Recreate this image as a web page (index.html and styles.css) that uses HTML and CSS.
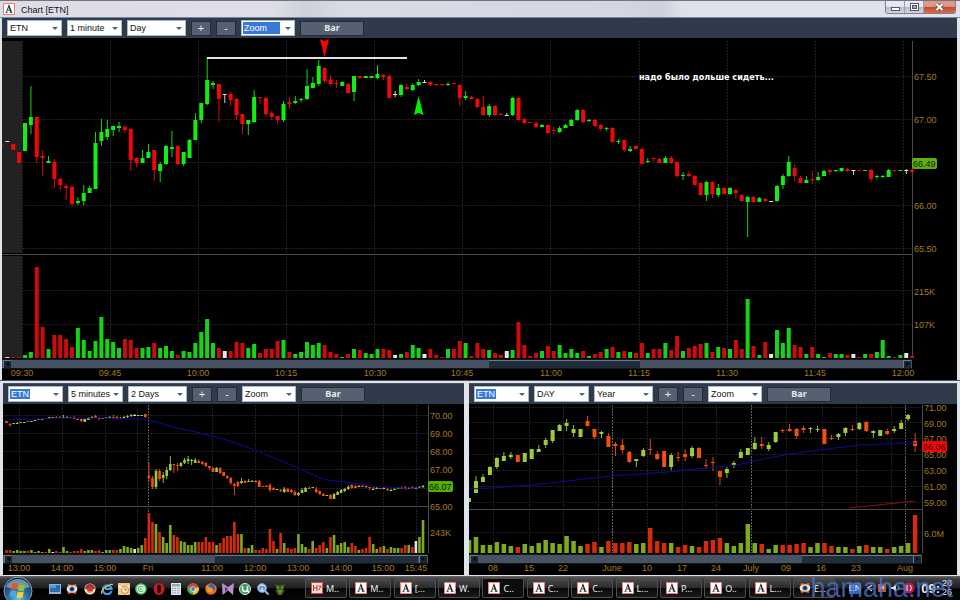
FILE: index.html
```html
<!DOCTYPE html>
<html>
<head>
  <meta charset="utf-8">
  <title>Chart [ETN]</title>
  <meta name="viewport" content="width=device-width, initial-scale=1">
  <link rel="stylesheet" href="styles.css">
</head>
<body>
  <!-- shared icons -->
  <svg class="defs" width="0" height="0" aria-hidden="true">
    <symbol id="logo" viewBox="0 0 12 12">
      <rect x="0.5" y="0.5" width="11" height="11" fill="#fff" stroke="#e8807a"/>
      <path d="M5.800 2.800 L3.500 9 M4.300 7 H7.500 M2.500 9.400 H4.600 M6.800 9.400 H9.600" stroke="#222" stroke-width="0.8" fill="none"/>
      <path d="M5.800 2.800 L8.200 9" stroke="#222" stroke-width="1.500"/>
      <circle cx="5.800" cy="2.200" r="0.800" fill="#d33"/>
    </symbol>
    <symbol id="eye" viewBox="0 0 12 12">
      <path d="M2 1 L6 2 L10 1 L11 5 L10 11 L6 10 L2 11 L1 6Z" fill="#e07030"/>
      <ellipse cx="6" cy="6" rx="5.4" ry="3.6" fill="#f4e8e0"/>
      <circle cx="6" cy="6" r="2.6" fill="#2c6aa8"/>
      <circle cx="6" cy="6" r="1.2" fill="#0a1c30"/>
    </symbol>
  </svg>

  <div class="window">
    <header class="titlebar">
      <svg class="logo"><use href="#logo"/></svg>
      <h1>Chart [ETN]</h1>
      <div class="window-buttons">
        <button type="button" aria-label="Minimize"><svg viewBox="0 0 18 12"><rect x="5.5" y="6.5" width="8" height="3" fill="#fff" stroke="#556"/></svg></button>
        <button type="button" aria-label="Maximize"><svg viewBox="0 0 18 12"><rect x="5.5" y="2.5" width="8" height="7" fill="#fff" stroke="#556"/><rect x="7.5" y="4.5" width="4" height="3" fill="#9ab" stroke="#556"/></svg></button>
        <button type="button" class="close" aria-label="Close"><svg viewBox="0 0 30 12"><path d="M12 3 L18 9 M18 3 L12 9" stroke="#555" stroke-width="3.6"/><path d="M12 3 L18 9 M18 3 L12 9" stroke="#fff" stroke-width="2"/></svg></button>
      </div>
    </header>

    <section class="pane pane-main">
      <div class="toolbar">
        <span class="combo"><select class="w-symbol" aria-label="Symbol"><option>ETN</option></select></span>
        <span class="combo"><select class="w-interval" aria-label="Interval"><option>1 minute</option></select></span>
        <span class="combo"><select class="w-range" aria-label="Range"><option>Day</option></select></span>
        <button type="button">+</button>
        <button type="button">-</button>
        <span class="combo"><select class="w-zoom selected" aria-label="Zoom"><option>Zoom</option></select></span>
        <button type="button" class="bar">Bar</button>
      </div>
      <svg id="minute" class="chart" viewBox="2 38 955 342"></svg>
    </section>

    <div class="split">
      <section class="pane">
        <div class="toolbar">
          <span class="combo"><select class="w-symbol selected" aria-label="Symbol"><option>ETN</option></select></span>
          <span class="combo"><select class="w-interval" aria-label="Interval"><option>5 minutes</option></select></span>
          <span class="combo"><select class="w-range" aria-label="Range"><option>2 Days</option></select></span>
          <button type="button">+</button>
          <button type="button">-</button>
          <span class="combo"><select class="w-zoom" aria-label="Zoom"><option>Zoom</option></select></span>
          <button type="button" class="bar">Bar</button>
        </div>
        <svg id="five" class="chart" viewBox="3 405 461 171"></svg>
      </section>
      <section class="pane">
        <div class="toolbar">
          <span class="combo"><select class="w-symbol selected" aria-label="Symbol"><option>ETN</option></select></span>
          <span class="combo"><select class="w-interval" aria-label="Interval"><option>DAY</option></select></span>
          <span class="combo"><select class="w-range" aria-label="Range"><option>Year</option></select></span>
          <button type="button">+</button>
          <button type="button">-</button>
          <span class="combo"><select class="w-zoom" aria-label="Zoom"><option>Zoom</option></select></span>
          <button type="button" class="bar">Bar</button>
        </div>
        <svg id="daily" class="chart" viewBox="469 405 488 171"></svg>
      </section>
    </div>
  </div>

  <footer class="taskbar">
    <button type="button" class="start" aria-label="Start">
      <svg viewBox="0 0 30 24">
        <defs><radialGradient id="orb" cx="50%" cy="80%" r="75%"><stop offset="0" stop-color="#5fc4ee"/><stop offset="0.5" stop-color="#2a6c98"/><stop offset="1" stop-color="#12304a"/></radialGradient></defs>
        <circle cx="15" cy="15" r="14" fill="url(#orb)" stroke="#88a4b4"/>
        <path d="M3 11 A13 13 0 0 1 27 11 Q15 15 3 11Z" fill="#a9c6d6" opacity="0.6"/>
        <path d="M9 8 Q12 6 15 8 L14 14 Q11 12.500 8 14Z" fill="#e8562a"/>
        <path d="M16 8.500 Q19 10 22 8.500 L21 14.500 Q18 16 15 14.500Z" fill="#8cc43c"/>
        <path d="M7.500 15 Q10.500 13.500 13.500 15 L12.500 21 Q9.500 19.500 6.500 21Z" fill="#4fa4e4"/>
        <path d="M14.700 15.500 Q17.500 17 20.700 15.500 L19.500 21.500 Q16.500 23 13.500 21.500Z" fill="#f8cc3c"/>
      </svg>
    </button>
    <nav class="quick">
      <svg viewBox="0 0 12 12"><rect y="1" width="12" height="10" fill="#8fb4d8"/><rect x="1" y="2" width="10" height="7" fill="#2f68b4"/><rect x="1" y="2" width="6" height="3" fill="#5e98d8"/></svg>
      <svg viewBox="0 0 12 12"><use href="#eye"/></svg>
      <svg viewBox="0 0 12 12"><circle cx="6" cy="6" r="5.600" fill="#eee3d0"/><path d="M1 6 A5 5 0 0 1 11 6Z" fill="#b3262a"/><circle cx="6" cy="6.500" r="3" fill="#c8372c"/><path d="M3 9 H9" stroke="#e8b030" stroke-width="1.500"/></svg>
      <svg viewBox="0 0 12 12"><path d="M10.500 8 A4.400 4.400 0 1 1 10.600 6 H4" fill="none" stroke="#3aa0e8" stroke-width="2.200"/><path d="M1 11 Q-1 8 5 4 Q11 0 11.500 2" fill="none" stroke="#f0c848" stroke-width="1.200"/></svg>
      <svg viewBox="0 0 12 12"><rect width="12" height="12" rx="1" fill="#f0c890"/><path d="M1 3 L6 7 L11 3" stroke="#fff" fill="none" stroke-width="1.500"/><circle cx="7" cy="7" r="3.500" fill="#fff0d0" stroke="#c8862c"/><path d="M7 5 V7 H9" stroke="#a86018" fill="none"/></svg>
      <svg viewBox="0 0 12 12"><circle cx="6" cy="6" r="5.800" fill="#4fc860"/><circle cx="6" cy="6" r="3.800" fill="none" stroke="#fff"/><circle cx="6" cy="6" r="1.600" fill="none" stroke="#fff"/><path d="M8 4 V7 H10" stroke="#fff" fill="none"/></svg>
      <svg viewBox="0 0 12 12"><ellipse cx="6" cy="6" rx="5.500" ry="6" fill="#c81c20"/><ellipse cx="6" cy="6" rx="2" ry="4.200" fill="#300"/></svg>
      <svg viewBox="0 0 12 12"><rect x="1" width="10" height="12" fill="#dfe5ea"/><rect x="2" y="1" width="8" height="2.500" fill="#8fa8c0"/><path d="M2 5.500 H10 M2 7.700 H10 M2 9.900 H10" stroke="#8898a8" stroke-dasharray="1.500 1"/></svg>
      <svg viewBox="0 0 12 12"><circle cx="6" cy="6" r="5.800" fill="#4cae4c"/><path d="M6 6 L1 3 A5.800 5.800 0 0 1 11.500 4.300Z" fill="#dc4030"/><path d="M6 6 L11.500 4 A5.800 5.800 0 0 1 6 11.800Z" fill="#f4c82c"/><circle cx="6" cy="6" r="2.600" fill="#fff"/><circle cx="6" cy="6" r="2" fill="#3c7ce0"/></svg>
      <svg viewBox="0 0 12 12"><circle cx="6" cy="6" r="5.800" fill="#e8701c"/><circle cx="6.500" cy="4.500" r="3.500" fill="#3868b0"/><path d="M1 2 Q4 4 8 6 Q8 10 3 9Z" fill="#f09830"/></svg>
      <svg viewBox="0 0 12 12"><path d="M0 0 L6 4 L12 0 L11 12 L6 7.500 L0.500 12Z" fill="#b88cc8"/><path d="M3 4 L6 6 L3 9Z" fill="#5c3070"/></svg>
      <svg viewBox="0 0 12 12"><circle cx="6" cy="6" r="5.500" fill="#2f9c58" stroke="#d8f0d8"/><path d="M3.500 3 V6 Q3.500 8.500 6 8.500 Q8.500 8.500 8.500 6 V3 V8 L10 9.500" fill="none" stroke="#fff" stroke-width="1.600"/></svg>
      <svg viewBox="0 0 12 12"><circle cx="5" cy="5" r="4.500" fill="#b4d4f0" stroke="#5c8cc0"/><path d="M3 7 V4 H7 V7" stroke="#2c60a0" fill="none"/><path d="M8 8 L11.500 11.500" stroke="#9cb8d8" stroke-width="2"/></svg>
      <svg viewBox="0 0 12 12"><path d="M1 1 L4 2 H8 L11 1 L9.500 6 L10.500 8 L8 12 H4 L1.500 8 L2.500 6Z" fill="#3c5c1c"/><path d="M3 4 L5 5 M9 4 L7 5 M4 8 H8 M5 10 H7" stroke="#98c040"/></svg>
    </nav>
    <div class="tasks">
      <button type="button"><svg class="icon" viewBox="0 0 12 12"><rect x="0.500" y="0.500" width="11" height="11" fill="#f8dcd8" stroke="#d84840"/><path d="M2.500 3 V9 M2.500 6 H6 M6 3 V9 M8 8 L10 4 M7.500 4 H10" stroke="#c03028" fill="none"/></svg>M..</button>
      <button type="button"><svg class="icon"><use href="#logo"/></svg>M..</button>
      <button type="button"><svg class="icon"><use href="#logo"/></svg>[...</button>
      <button type="button"><svg class="icon"><use href="#logo"/></svg>W.</button>
      <button type="button" class="active"><svg class="icon"><use href="#logo"/></svg>C..</button>
      <button type="button"><svg class="icon"><use href="#logo"/></svg>C..</button>
      <button type="button"><svg class="icon"><use href="#logo"/></svg>C..</button>
      <button type="button"><svg class="icon"><use href="#logo"/></svg>L...</button>
      <button type="button"><svg class="icon"><use href="#logo"/></svg>P...</button>
      <button type="button"><svg class="icon"><use href="#logo"/></svg>O..</button>
      <button type="button"><svg class="icon"><use href="#logo"/></svg>L...</button>
      <button type="button"><svg class="icon"><use href="#eye"/></svg>E...</button>
    </div>
    <div class="tray">
      <span class="lang">EN</span>
      <svg class="tray-icons" viewBox="0 0 52 12">
        <path d="M6 3 L2 6 L6 9" fill="none" stroke="#ccc" stroke-width="1.500"/>
        <rect x="12" y="2" width="8" height="8" fill="#b85848"/><rect x="14" y="4" width="4" height="3" fill="#e8c0b0"/>
        <path d="M25 5 H27 L30 2 V10 L27 7 H25Z" fill="#ddd"/><path d="M32 4 Q34 6 32 8" stroke="#3cb060" fill="none" stroke-width="1.500"/>
        <circle cx="43" cy="6" r="5.500" fill="#c01850"/><path d="M41 3 V9 M44 3 Q47 6 44 9" stroke="#fff" fill="none"/>
      </svg>
      <span class="clock">09:</span>
      <span class="seconds">28<br>26</span>
    </div>
    <span class="watermark">hamaha.net</span>
  </footer>

  <script src="charts.js"></script>
</body>
</html>
```

FILE: styles.css
```css
* {
  box-sizing: border-box;
}

body {
  margin: 0;
  min-height: 100vh;
  display: flex;
  flex-direction: column;
  background: #000;
  color: #111;
  font-family: "Liberation Sans", Arial, sans-serif;
  font-size: 9px;
  overflow-x: hidden;
}

button,
select {
  font: inherit;
  margin: 0;
  padding: 0;
}

.defs {
  position: absolute;
}

.window {
  background: #dfe3ea;
}

/* title bar */
.titlebar {
  display: flex;
  align-items: center;
  height: 18px;
  padding: 0 4px 0 3px;
  border-top: 1px solid #77717f;
  border-bottom: 1px solid #7288a5;
  background: linear-gradient(90deg, #dcdde4 0%, #dfe0e7 28%, #ced1da 32%, #d9dce5 36%, #d3d7e1 65%, #ced1db 69%, #dfe1e9 71%, #dfe2ea 100%);
}

.logo {
  width: 12px;
  height: 12px;
}

.titlebar h1 {
  flex: 1;
  margin: 2px 0 0 6px;
  font-size: 9px;
  font-weight: normal;
  line-height: 16px;
}

.window-buttons {
  display: flex;
  align-self: flex-start;
  height: 13px;
  border: 1px solid #7d8292;
  border-top: 0;
  border-radius: 0 0 3px 3px;
  overflow: hidden;
}

.window-buttons button {
  display: flex;
  width: 19px;
  border: 0;
  border-right: 1px solid #9aa0b0;
  background: linear-gradient(#e6e9ef 45%, #b4bac8 50%, #d0d5df);
}

.window-buttons .close {
  width: 31px;
  border-right: 0;
  background: linear-gradient(#e09a88 45%, #c44a2e 50%, #dc6a48);
}

.window-buttons svg {
  width: 100%;
  height: 12px;
}

/* chart panes */
.pane {
  min-width: 0;
  background: #000;
}

.pane-main {
  margin: 0 3px 0 2px;
}

.split {
  display: grid;
  grid-template-columns: 461fr 488fr;
  gap: 5px;
  padding: 0 3px 1px;
  border-top: 1px solid #4b566c;
}

.split .pane {
  margin-top: 2px;
  border-top: 1px solid #4a505c;
}

.toolbar {
  display: flex;
  align-items: center;
  gap: 5px;
  height: 20px;
  padding: 0 5px;
  background: #2f3b4b;
}

.combo {
  position: relative;
  display: flex;
}

.combo::after {
  content: "";
  position: absolute;
  right: 4px;
  top: 7px;
  width: 6px;
  height: 3px;
  background: #46658f;
  clip-path: polygon(0 0, 100% 0, 50% 100%);
  pointer-events: none;
}

.toolbar select {
  appearance: none;
  height: 16px;
  padding: 0 12px 0 2px;
  border: 1px solid #a9bacb;
  border-radius: 0;
  background: #fff;
  color: #111;
}

.toolbar .w-symbol,
.toolbar .w-interval {
  width: 55px;
}

.toolbar .w-range {
  width: 59px;
}

.toolbar .w-zoom {
  width: 54px;
}

.toolbar .selected {
  color: #fff;
  background: linear-gradient(#3a78d8, #3a78d8) 1px 2px / 20px 10px no-repeat #fff;
}

.toolbar .w-zoom.selected {
  background-position: 1px 1px;
  background-size: 37px 12px;
}

.toolbar button {
  width: 20px;
  height: 15px;
  border: 1px solid #232c38;
  background: #566070;
  color: #e6e9ee;
  font-size: 11px;
  line-height: 12px;
}

.toolbar .bar {
  width: 64px;
  font-family: "Noto Sans", sans-serif;
  font-size: 9px;
  font-weight: bold;
}

.chart {
  display: block;
  width: 100%;
  height: auto;
  background: #000;
}

.chart text {
  fill: #a77a1c;
}

.chart .note {
  font-family: "DejaVu Sans Condensed", "DejaVu Sans", sans-serif;
  font-weight: bold;
  fill: #fff;
}

.chart .badge-text {
  fill: #0b1c00;
}

.chart .badge-text.down {
  fill: #4c0000;
}

.grid {
  stroke: #202020;
  stroke-dasharray: 2 1;
}

.grid.strong {
  stroke: #606060;
}

.axis {
  stroke: #4a4a4a;
}

/* taskbar */
.taskbar {
  position: relative;
  flex: 1;
  display: flex;
  align-items: center;
  min-height: 23px;
  padding-left: 3px;
  background: linear-gradient(#6a6a6a, #3c3c3e 12%, #1c1d1f 50%, #000 54%, #050505);
  color: #eee;
  overflow: hidden;
}

.start {
  align-self: flex-start;
  width: 30px;
  height: 24px;
  border: 0;
  background: none;
}

.start svg {
  display: block;
}

.quick {
  display: flex;
  justify-content: space-between;
  width: 237px;
  margin: 2px 0 0 16px;
}

.quick svg {
  width: 12px;
  height: 12px;
}

.tasks {
  display: flex;
  justify-content: space-between;
  width: 530px;
  margin-left: 19px;
}

.tasks button {
  display: flex;
  align-items: center;
  gap: 3px;
  width: 42px;
  height: 20px;
  padding-left: 5px;
  border: 1px solid #4e4e50;
  border-radius: 2px;
  background: linear-gradient(#4a4a4c, #2a2a2c 48%, #080808 52%, #1a1a1a);
  color: #eee;
  font-family: "Noto Sans", sans-serif;
}

.tasks .active {
  background: #0c0c0d;
}

.tasks .icon {
  flex: none;
  width: 12px;
  height: 12px;
}

.tray {
  display: flex;
  align-items: center;
  margin-left: auto;
  padding-right: 8px;
}

.lang {
  background: #2d68c4;
  line-height: 11px;
}

.tray-icons {
  width: 52px;
  height: 12px;
  margin: 0 3px 0 5px;
}

.clock {
  font-size: 13px;
  font-weight: bold;
}

.seconds {
  margin-left: 2px;
  line-height: 9px;
}

.watermark {
  position: absolute;
  right: 7px;
  top: -3px;
  color: #4a70c4;
  font-size: 27px;
  line-height: 30px;
  opacity: 0.8;
  pointer-events: none;
}
```

FILE: charts.js
```javascript
// each bar: colour high top bottom low volume
var minuteBars = "r 145 145 146 146 1,w 141 141 142 142 1,r 144 144 150 150 1,r 152 152 163 163 1,g 123 123 151 151 3,g 86 117 125 134 6,r 117 117 157 163 91,r 150 156 158 176 31,g 156 161 163 163 9,r 159 162 179 188 23,r 178 179 185 190 23,r 184 186 188 200 19,r 186 187 204 205 11,g 197 201 203 205 30,g 185 193 201 205 18,g 186 188 193 193 7,g 132 143 189 189 17,g 119 132 141 146 41,g 120 129 137 140 19,g 126 126 130 136 16,g 122 126 128 132 10,r 125 127 130 133 19,r 128 129 160 171 18,r 157 158 163 167 10,g 150 158 163 163 10,g 144 152 158 158 11,r 150 150 170 181 15,g 162 164 171 182 10,g 145 146 164 165 12,g 131 147 149 157 7,r 145 146 164 165 3,g 152 152 164 166 7,g 139 140 158 158 6,g 113 120 140 140 15,g 103 103 120 123 26,g 58 80 104 105 39,g 81 83 85 89 15,r 84 84 99 122 10,w 94 94 95 103 7,r 92 94 100 106 7,r 98 99 115 120 16,r 114 114 124 134 15,g 120 120 124 135 10,g 90 97 122 123 14,r 97 97 98 104 5,r 97 98 114 116 9,r 111 113 117 120 9,r 116 116 120 124 17,g 101 104 120 122 18,r 97 102 104 109 6,g 96 101 103 104 4,g 98 99 100 102 6,g 69 86 99 100 16,g 77 83 88 88 13,g 60 66 84 86 15,r 67 68 81 83 13,r 75 80 84 86 6,r 80 83 84 88 4,g 81 82 86 86 1,r 83 84 93 94 4,g 76 76 92 101 9,r 76 76 78 79 8,g 76 76 78 78 5,g 76 76 78 78 4,g 65 74 78 79 9,r 74 75 77 80 9,r 74 76 98 98 8,w 91 94 95 97 3,g 84 85 95 97 4,r 84 87 89 90 6,g 83 85 90 91 13,g 79 82 85 86 10,w 80 82 83 83 4,r 81 82 85 86 9,r 84 84 85 86 3,r 84 84 85 86 1,g 82 84 85 86 9,r 83 83 84 85 9,r 84 85 98 106 17,g 91 96 98 100 15,r 96 97 99 99 2,r 98 99 107 108 15,r 96 107 115 116 9,g 104 106 115 117 8,r 105 106 115 116 5,r 113 114 115 115 3,w 113 115 116 116 7,g 97 98 115 116 8,r 97 98 120 121 36,r 118 119 123 124 13,r 122 122 123 123 2,r 122 123 127 128 5,g 124 125 127 127 7,r 124 125 133 134 12,r 127 130 131 134 7,g 126 128 132 133 13,g 124 125 128 128 5,g 119 120 126 126 9,g 109 110 120 121 5,r 109 110 122 123 7,g 119 120 121 122 2,r 119 120 126 127 4,r 124 125 129 131 6,g 127 128 129 131 9,r 127 128 142 143 11,g 139 141 142 144 6,r 140 140 150 152 7,g 146 149 151 152 6,r 145 146 149 149 5,r 148 149 164 164 15,g 158 161 162 163 5,r 158 158 159 162 9,r 158 159 163 163 9,g 156 158 163 163 15,r 156 158 163 164 8,r 161 162 176 178 22,g 172 175 176 180 7,r 171 174 176 177 10,r 175 176 185 185 12,r 182 183 195 196 14,g 181 182 195 201 15,r 181 182 194 198 6,g 184 188 195 197 11,r 187 188 194 194 10,g 187 188 194 195 9,r 189 190 193 199 18,r 194 195 201 202 9,g 196 197 202 237 59,r 196 197 202 203 12,g 197 198 202 202 3,r 198 199 201 202 16,w 201 201 202 202 4,g 185 186 201 202 28,g 174 176 185 189 15,g 156 162 176 177 30,r 164 168 176 181 13,r 176 178 183 183 11,g 176 180 183 183 4,r 171 179 180 184 11,g 172 177 180 181 4,g 170 171 176 176 1,r 169 170 172 175 5,g 170 170 171 172 4,g 168 168 171 172 4,r 168 169 171 172 3,w 170 170 171 175 4,r 170 170 171 171 1,g 170 170 171 171 4,r 169 170 179 182 4,g 175 176 177 179 6,g 175 176 177 178 18,g 169 170 177 177 2,r 170 170 171 172 1,g 170 170 171 171 3,w 169 170 171 174 5,r 169 170 172 173 2";

var fiveBars = "r 422 422 424 424 3,r 424 425 426 428 3,g 424 424 425 425 2,g 423 424 425 425 3,g 423 423 424 424 2,g 423 423 424 424 2,r 422 422 423 423 2,g 422 422 423 423 3,g 421 421 422 422 1,g 420 420 421 421 2,g 420 420 421 421 1,r 419 419 420 420 1,g 418 418 419 420 4,w 418 418 419 419 1,r 417 418 419 419 2,r 417 418 419 419 1,g 416 418 419 419 6,g 417 418 419 419 2,r 418 418 419 419 1,r 417 419 420 420 2,r 419 420 421 421 2,r 420 420 422 423 4,g 420 420 423 423 2,g 418 419 421 421 3,g 417 418 419 420 3,r 416 417 419 419 2,r 418 419 420 421 3,g 419 419 420 420 1,g 418 418 419 419 3,g 417 418 419 419 3,r 416 418 419 419 3,r 417 418 419 419 3,g 418 419 420 420 4,g 417 418 419 419 7,g 416 417 418 419 6,g 415 416 417 418 5,w 415 416 417 417 4,g 416 416 417 417 5,g 416 416 417 417 8,r 415 415 418 419 15,r 463 477 479 483 40,r 477 479 488 490 31,g 470 472 488 490 29,r 470 472 480 482 21,g 473 476 479 484 16,g 468 471 477 480 10,g 457 465 471 472 28,r 465 465 466 474 18,r 464 466 467 472 16,g 463 464 467 468 12,g 459 461 464 465 11,g 457 460 462 465 8,g 460 461 462 466 8,g 459 461 464 464 11,r 460 462 464 464 11,r 462 463 465 466 11,r 463 464 467 468 16,r 467 467 469 471 11,r 468 469 473 473 11,g 468 469 473 473 8,r 468 469 474 475 10,r 473 473 477 477 15,r 476 477 479 480 17,r 478 479 484 486 17,r 484 485 487 496 31,r 482 483 487 488 19,g 479 482 484 485 19,r 481 482 484 484 5,g 480 482 483 483 5,g 481 482 483 483 8,r 481 482 483 484 3,r 481 482 488 488 3,r 487 487 488 488 5,r 486 487 488 488 4,r 484 486 491 493 24,r 488 489 491 491 12,g 490 490 491 491 4,r 490 491 492 493 20,g 488 490 493 494 10,r 489 490 493 493 5,r 490 491 493 494 4,r 491 493 496 497 5,g 493 494 496 497 19,g 489 491 494 494 9,g 488 489 493 493 6,r 487 489 490 490 4,g 488 488 489 489 12,r 488 490 493 494 5,r 491 492 495 496 8,r 494 495 497 497 11,g 496 496 497 497 5,r 495 496 500 500 16,g 494 495 500 500 18,g 492 493 496 496 8,g 490 491 494 494 10,g 489 490 492 493 11,g 486 488 490 491 6,r 485 486 489 490 10,r 486 487 489 489 7,g 486 487 488 488 3,r 486 487 488 488 4,r 486 487 488 489 5,r 488 488 489 491 16,g 488 490 491 491 9,g 488 489 490 490 4,r 489 489 490 490 6,g 488 489 490 490 7,r 489 490 491 492 4,g 490 491 492 492 6,g 489 490 491 491 5,g 488 489 490 490 5,r 487 489 490 490 5,r 487 488 489 491 8,g 488 489 490 490 8,r 487 488 489 490 6,w 488 489 490 490 12,g 487 488 489 489 16,g 486 487 488 489 33";

var dailyBars = "g 499 499 503 503 13,g 477 482 494 494 16,g 475 478 483 483 8,g 467 468 476 476 8,g 458 459 468 470 11,g 453 457 462 462 9,g 453 456 458 460 7,r 456 456 463 463 6,g 454 454 463 463 9,g 450 450 460 460 7,g 446 450 453 453 10,g 439 441 446 449 13,g 431 431 442 444 10,g 425 426 432 432 9,g 420 424 427 432 17,g 426 430 434 438 12,g 430 430 438 438 7,r 417 422 427 427 9,r 430 430 438 440 11,g 432 433 435 439 6,r 434 437 448 448 12,r 443 445 447 457 10,r 440 446 451 454 10,r 452 453 463 464 11,g 460 460 462 468 9,g 449 451 457 458 10,r 440 450 451 456 25,r 452 455 460 461 12,r 452 452 468 468 10,g 454 456 468 471 10,r 453 458 459 462 6,r 450 455 458 462 8,g 447 449 457 459 7,r 448 449 459 459 6,r 460 466 467 470 12,r 458 463 464 472 13,r 472 472 478 486 15,g 468 470 474 479 10,g 462 464 466 469 7,g 450 453 459 459 10,g 449 449 456 456 29,g 438 444 450 451 10,r 438 445 447 450 9,g 443 446 450 452 4,g 433 433 443 444 8,r 430 431 432 434 8,r 425 430 432 433 8,r 429 430 437 440 9,r 427 429 431 434 10,g 428 429 430 434 6,g 427 430 431 433 10,r 430 430 445 445 10,r 436 439 440 441 7,g 434 435 438 441 6,g 428 429 434 437 6,r 426 430 431 432 4,g 423 424 430 431 7,r 422 423 432 433 8,g 431 432 434 439 6,g 431 431 437 437 6,r 430 432 435 436 4,g 427 430 432 434 6,g 421 424 430 430 7,g 415 416 420 422 10,r 434 442 447 453 38";

var bright = { g: "#12ee12", r: "#f00808", w: "#e4e4e4" };
var brightVolume = { g: "#14d414", r: "#cc0c0c", w: "#e4e4e4" };
var soft = { g: "#9ccc3c", r: "#f4500c", w: "#e4e4e4" };
var softVolume = { g: "#7cac1c", r: "#d42c08", w: "#e4e4e4" };

function add(svg, name, attrs, text) {
  var el = document.createElementNS("http://www.w3.org/2000/svg", name);
  for (var key in attrs) {
    el.setAttribute(key, attrs[key]);
  }
  if (text) el.textContent = text;
  svg.appendChild(el);
}

function rect(svg, x, y, w, h, fill) {
  add(svg, "rect", { x: x, y: y, width: w, height: h, fill: fill });
}

function line(svg, x1, y1, x2, y2, cls) {
  add(svg, "line", { x1: x1, y1: y1, x2: x2, y2: y2, "class": cls });
}

function drawGrid(svg, c) {
  c.columns.forEach(function (x) {
    var strong = c.strong && c.strong.indexOf(x) > -1;
    line(svg, x + 0.5, c.top, x + 0.5, c.base, strong ? "grid strong" : "grid");
  });
  c.rows.forEach(function (y) {
    line(svg, c.left, y + 0.5, c.right, y + 0.5, "grid");
  });
  rect(svg, c.left, c.split - 1, c.right - c.left, 3, "#000");
  line(svg, c.left, c.split + 0.5, c.right, c.split + 0.5, "axis");
  line(svg, c.right + 0.5, c.top, c.right + 0.5, c.base, "axis");
}

function drawBars(svg, c) {
  c.bars.split(",").forEach(function (row, i) {
    var f = row.split(" ");
    var x = c.start + c.step * i;
    var h = +f[1], t = +f[2], b = +f[3], l = +f[4], v = +f[5];
    if (l > h) rect(svg, x - 0.4, h, 0.9, l - h, c.colors[f[0]]);
    rect(svg, x - c.body / 2, t, c.body, Math.max(b - t, 1), c.colors[f[0]]);
    rect(svg, x - c.volume / 2, c.base - v, c.volume, v, c.volumeColors[f[0]]);
  });
}

function drawScroll(svg, c) {
  var y = c.base + 1;
  var w = c.right - c.left;
  rect(svg, c.left, y, w, 10, "#101820");
  rect(svg, c.left, y + 1, w, 8, "#475362");
  rect(svg, c.thumb[0], y + 1, c.thumb[1] - c.thumb[0], 8, "#222d3b");
  rect(svg, c.thumb[0], y + 1, c.thumb[1] - c.thumb[0], 1, "#6c7a88");
  [c.left + 1, c.right - 9].forEach(function (x, i) {
    rect(svg, x, y + 1, 8, 8, "#6c7a88");
    rect(svg, x + 1, y + 2, 7, 7, "#1c2633");
    add(svg, "path", { d: i ? "M" + (x + 3) + " " + (y + 3) + "l3 2l-3 2z" : "M" + (x + 6) + " " + (y + 3) + "l-3 2l3 2z", fill: "#05080c" });
  });
}

function drawLabels(svg, c) {
  c.prices.forEach(function (p) {
    add(svg, "text", { x: c.right + 2, y: p[0] + 4 }, p[1]);
  });
  c.times.forEach(function (t) {
    add(svg, "text", { x: t[0], y: c.base + 18, "text-anchor": "middle" }, t[1]);
  });
  add(svg, "rect", { x: c.right, y: c.badge[0] - 5, width: 25, height: 11, rx: 2, fill: c.badge[2] });
  add(svg, "text", { x: c.right + 1, y: c.badge[0] + 4, "class": "badge-text " + c.badge[3] }, c.badge[1]);
}

function curve(svg, points, stroke) {
  add(svg, "polyline", { points: points, fill: "none", stroke: stroke });
}

function draw(c) {
  var svg = document.getElementById(c.id);
  if (c.before) c.before(svg);
  drawGrid(svg, c);
  drawBars(svg, c);
  drawScroll(svg, c);
  drawLabels(svg, c);
  if (c.after) c.after(svg);
}

draw({
  id: "minute", left: 2, right: 912, top: 41, split: 254, base: 358,
  columns: [22, 110, 198, 286, 374, 462, 550, 639, 727, 815, 903],
  rows: [76, 119, 162, 205, 248, 290, 324],
  bars: minuteBars, start: 1.5, step: 5.875, body: 4, volume: 4,
  colors: bright, volumeColors: brightVolume, thumb: [489, 640],
  prices: [[76, "67.50"], [119, "67.00"], [205, "66.00"], [248, "65.50"], [291, "215K"], [324, "107K"]],
  times: [[22, "09:30"], [110, "09:45"], [198, "10:00"], [286, "10:15"], [375, "10:30"], [462, "10:45"], [551, "11:00"], [639, "11:15"], [727, "11:30"], [815, "11:45"], [903, "12:00"]],
  badge: [163, "66.49", "#62ae12", "up"],
  before: function (svg) {
    // premarket
    rect(svg, 2, 41, 20, 317, "#222");
  },
  after: function (svg) {
    rect(svg, 207, 57, 200, 2, "#e8e0e8");
    add(svg, "path", { d: "M320 39 L324.500 41 L329 39 L324.500 57Z", fill: "#f00" });
    add(svg, "path", { d: "M418.500 96 L423.500 115 L418.500 113 L414 115Z", fill: "#0e0" });
    add(svg, "text", { x: 639, y: 80, "class": "note" }, "надо было дольше сидеть...");
  }
});

draw({
  id: "five", left: 3, right: 428, top: 406, split: 507, base: 554,
  columns: [19, 62, 105, 137, 148, 212, 255, 298, 341, 383, 416],
  strong: [148],
  rows: [416, 434, 452, 470, 489, 533],
  bars: fiveBars, start: 6.5, step: 3.56, body: 2.6, volume: 2.6,
  colors: soft, volumeColors: softVolume, thumb: [215, 418],
  prices: [[416, "70.00"], [434, "69.00"], [452, "68.00"], [470, "67.00"], [507, "65.00"], [533, "243K"]],
  times: [[19, "13:00"], [62, "14:00"], [105, "15:00"], [148, "Fri"], [212, "11:00"], [255, "12:00"], [298, "13:00"], [341, "14:00"], [383, "15:00"], [416, "15:45"]],
  badge: [487, "66.07", "#52b000", "up"],
  after: function (svg) {
    curve(svg, "3,421 40,420 53,419 107,419 127,420 143,420 157,423 173,428 200,434 227,441 260,453 293,467 320,479 327,481 353,484 373,487 397,489 423,489", "#0a0a9c");
  }
});

draw({
  id: "daily", left: 469, right: 922, top: 406, split: 510, base: 554,
  columns: [493, 529, 563, 598, 612, 647, 682, 716, 751, 786, 822, 856, 891, 905],
  strong: [612, 751, 905],
  rows: [408, 423, 439, 455, 471, 487, 503, 533],
  bars: dailyBars, start: 469, step: 6.97, body: 4, volume: 4.5,
  colors: soft, volumeColors: softVolume, thumb: [802, 913],
  prices: [[408, "71.00"], [424, "69.00"], [439, "67.00"], [455, "65.00"], [471, "63.00"], [487, "61.00"], [503, "59.00"], [534, "6.0M"]],
  times: [[493, "08"], [529, "15"], [563, "22"], [612, "June"], [647, "10"], [682, "17"], [716, "24"], [751, "July"], [786, "09"], [821, "16"], [856, "23"], [905, "Aug"]],
  badge: [447, "66.06", "#f00808", "down"],
  after: function (svg) {
    curve(svg, "469,490 493,489 533,486 567,482 610,477 640,475 667,473 707,469 737,466 767,459 797,454 827,450 860,446 907,444 917,444", "#0a0a9c");
    curve(svg, "849,509 915,502", "#8c1010");
  }
});
```
